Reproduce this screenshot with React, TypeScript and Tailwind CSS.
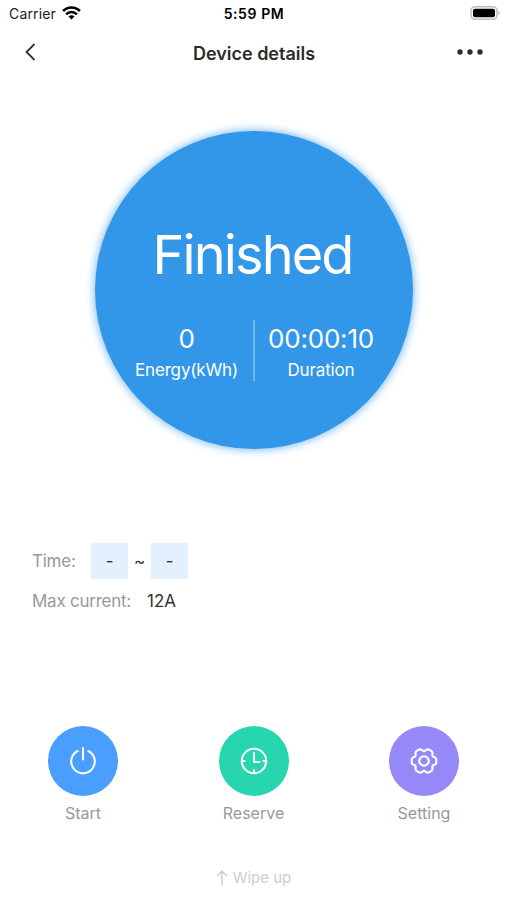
import type { ReactNode } from "react";

const gearPath =
  Array.from({ length: 120 }, (_, i) => {
    const a = (i / 120) * Math.PI * 2;
    const r = 11.5 + 1.25 * Math.cos(6 * a) - 0.4 * Math.cos(12 * a);
    return `${i ? "L" : "M"}${(r * Math.cos(a)).toFixed(2)} ${(r * Math.sin(a)).toFixed(2)}`;
  }).join("") + "Z";

function StatusBar() {
  return (
    <header className="grid h-7 grid-cols-3 items-center pl-[9px] pr-[6px] text-black">
      <div className="flex items-center gap-[6px]">
        <span className="text-[14px] leading-7 tracking-[0.15px] text-[#222]">Carrier</span>
        <svg className="-mt-[2px]" width="19" height="14" viewBox="0 0 19 14" fill="none" stroke="#000" strokeWidth="2.6">
          <path d="M1.1 5C5.8 .3 13.2 .3 17.9 5" />
          <path d="M4.1 8.3C7.1 5.3 11.9 5.3 14.9 8.3" />
          <path d="M6.5 10.5Q9.5 8 12.5 10.5L9.5 13.5Z" fill="#000" stroke="none" />
        </svg>
      </div>
      <span className="-ml-[2px] text-center text-[14px] font-semibold leading-7 tracking-[0.6px]">5:59 PM</span>
      <svg className="-mt-[2px] justify-self-end" width="31" height="14" viewBox="0 0 31 14">
        <rect x="1" y=".7" width="26" height="12.6" rx="4" fill="#fff" stroke="#bdbdbd" strokeWidth="1.5" />
        <rect x="3" y="2.7" width="22" height="8.6" rx="2" fill="#000" />
        <path d="M28.5 4.8Q31 7 28.5 9.2Z" fill="#b5b5b5" />
      </svg>
    </header>
  );
}

function NavBar() {
  return (
    <nav className="grid h-[50px] grid-cols-3 items-center pl-6 pr-6 text-[#2b2b2b]">
      <svg className="-mt-[2px]" width="12" height="18" viewBox="0 0 12 18" fill="none" stroke="#333" strokeWidth="1.8">
        <path d="M10.5 1L2.5 9L10.5 17" />
      </svg>
      <h1 className="ml-px mt-px whitespace-nowrap text-center text-[18px] font-semibold leading-6">Device details</h1>
      <svg className="-mt-[2px] justify-self-end" width="26" height="6" viewBox="0 0 26 6" fill="#2d2d2d">
        <circle cx="3" cy="3" r="2.7" />
        <circle cx="13" cy="3" r="2.7" />
        <circle cx="23" cy="3" r="2.7" />
      </svg>
    </nav>
  );
}

function Stat({ value, label, className }: { value: string; label: string; className: string }) {
  return (
    <div className={`flex flex-col items-center whitespace-nowrap ${className}`}>
      <span className="text-[26px] leading-[38px] tracking-[-0.2px]">{value}</span>
      <span className="mt-px text-[17px] leading-[22px] tracking-[-0.15px]">{label}</span>
    </div>
  );
}

function Action({ label, color, children }: { label: string; color: string; children: ReactNode }) {
  return (
    <button className="flex w-[70px] flex-col items-center">
      <span className={`flex size-[70px] items-center justify-center rounded-full ${color}`}>
        <svg width="32" height="32" viewBox="-16 -16 32 32" fill="none" stroke="#fff" strokeWidth="2.1" strokeLinecap="round" strokeLinejoin="round">
          {children}
        </svg>
      </span>
      <span className="mt-[5px] text-[16px] leading-6 text-[#999]">{label}</span>
    </button>
  );
}

export default function App() {
  return (
    <main className="flex h-[900px] w-[507px] flex-col overflow-hidden bg-white font-['Inter','Liberation_Sans',sans-serif]">
      <StatusBar />
      <NavBar />
      <section className="ml-[95px] mt-[53px] flex size-[318px] shrink-0 flex-col items-center rounded-full bg-[#3296e9] text-white shadow-[0_0_8px_1px_rgba(50,150,233,0.65)]">
        <h2 className="mr-[3px] mt-[92px] text-[54px] leading-[64px] tracking-[-1.85px]">Finished</h2>
        <div className="mt-[33px] flex h-[61px] w-full">
          <Stat value="0" label="Energy(kWh)" className="ml-[25px] w-[133px]" />
          <div className="h-[61px] w-[2px] bg-[#72b7f0]" />
          <Stat value="00:00:10" label="Duration" className="w-[132px]" />
        </div>
      </section>
      <section className="mt-[94px] flex flex-col pl-8 text-[17px] tracking-[-0.25px] text-[#999]">
        <div className="flex h-9 items-center">
          <span className="w-[59px] pt-0.5">Time:</span>
          <span className="flex h-9 w-[37px] items-center justify-center bg-[#e3f1ff] pt-0.5 text-[#333]">-</span>
          <span className="w-[23px] pt-0.5 text-center text-[#333]">~</span>
          <span className="flex h-9 w-[37px] items-center justify-center bg-[#e3f1ff] pt-0.5 text-[#333]">-</span>
        </div>
        <div className="mt-[11px] flex h-6 items-center">
          <span className="w-[115px] whitespace-nowrap">Max current:</span>
          <span className="tracking-normal text-[#333]">12A</span>
        </div>
      </section>
      <section className="mt-[112px] flex justify-between px-[48px]">
        <Action label="Start" color="bg-[#4a9eff]">
          <path d="M0 -13V-1.5M-5.3 -10A11.8 11.8 0 1 0 5.3 -10" />
        </Action>
        <Action label="Reserve" color="bg-[#27d5af]">
          <circle r="12.2" />
          <path d="M0 -8V1H5.5M-12 0H-9.3M12 0H9.3M0 12V9.3" />
        </Action>
        <Action label="Setting" color="bg-[#9588f7]">
          <path d={gearPath} />
          <circle r="4.7" />
        </Action>
      </section>
      <footer className="mt-[41px] flex h-6 items-center justify-center gap-[5px] text-[15px] text-[#ccc]">
        <svg width="12" height="16" viewBox="0 0 12 16" fill="none" stroke="#ccc" strokeWidth="1.5">
          <path d="M6 15V1.5M1 6L6 1.3L11 6" />
        </svg>
        <span>Wipe up</span>
      </footer>
    </main>
  );
}
